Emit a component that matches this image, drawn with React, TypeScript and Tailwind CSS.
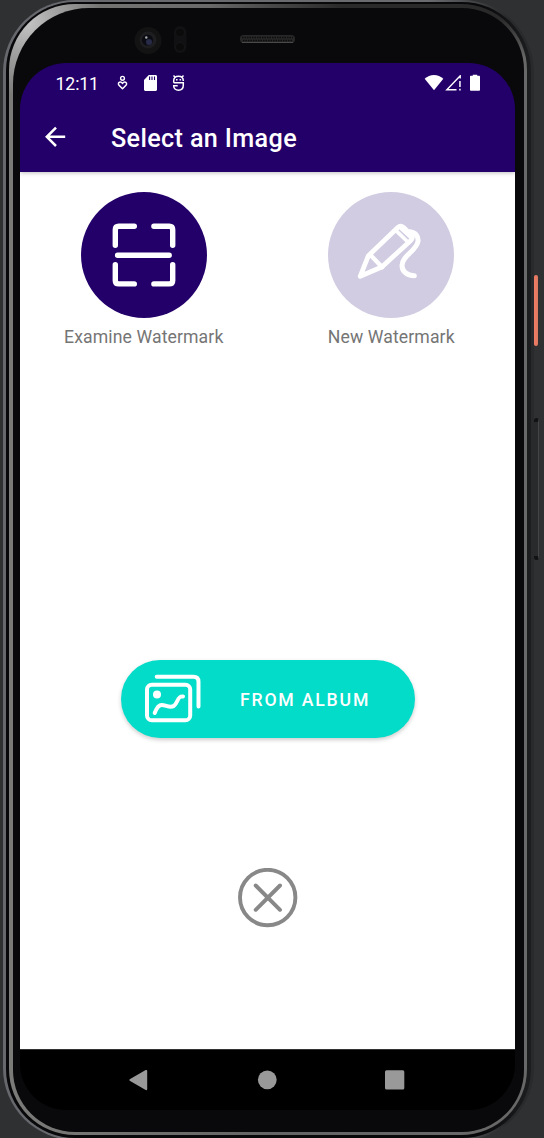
import type { ReactNode } from "react";

function Sensors() {
  return (
    <svg className="h-[55px] w-[511px] shrink-0" viewBox="13 8 511 55" fill="none">
      <circle cx="148" cy="40.5" r="13.5" fill="#131314" />
      <circle cx="148" cy="40" r="8.5" fill="#1e1e21" />
      <circle cx="147.5" cy="40" r="5.5" fill="#0b0b12" />
      <circle cx="149" cy="42" r="3" fill="#282b48" />
      <circle cx="146.3" cy="37.5" r="1.2" fill="#a9aaaf" />
      <rect x="174" y="26" width="12.5" height="27" rx="6" fill="#111113" />
      <circle cx="180" cy="32.5" r="4.5" fill="#0b0b0c" stroke="#161618" />
      <circle cx="180" cy="47" r="4.5" fill="#0b0b0c" stroke="#161618" />
      <rect x="240" y="35" width="55" height="8" rx="3.5" fill="#272727" />
      <path d="M242 37.5h51M243 40.5h50" stroke="#0d0d0d" strokeWidth="1.5" strokeDasharray="1.5 1" />
      <path d="M242 42.5h51" stroke="#484a49" />
    </svg>
  );
}

function StatusIcons() {
  return (
    <svg className="h-5 w-[74px]" viewBox="114 73 74 20" fill="none" stroke="#fff">
      <circle cx="122.5" cy="78.3" r="1.9" strokeWidth="1.4" />
      <path d="M122.5 88.7l-3.5-3.5c-1.3-1.5-.3-3.3 1.2-3.3 1 0 1.8.7 2.3 1.6.5-.9 1.3-1.6 2.3-1.6 1.5 0 2.5 1.8 1.2 3.3z" strokeWidth="1.5" strokeLinejoin="round" />
      <path d="M148.8 75h6.7c.8 0 1.5.6 1.5 1.4v13c0 .8-.7 1.5-1.5 1.5h-10c-.8 0-1.5-.7-1.5-1.5V80z" fill="#fff" stroke="none" />
      <path d="M149.6 76.5v3.4M152 76.5v3.4M154.5 76.5v3.4" stroke="#230069" strokeWidth="1.1" />
      <path d="M173.5 75.5l1.4 1.5M183.5 75.5l-1.4 1.5M173.7 82.8v-1.7c0-3 2-4.8 4.8-4.8s4.8 1.8 4.8 4.8M173.7 82.8h9.6v2.5c0 3-2 4.9-4.8 4.9s-4.8-1.9-4.8-4.5h4" strokeWidth="1.5" />
      <path d="M176 79.8h1.6M179.5 79.8h1.6" strokeWidth="1.4" />
    </svg>
  );
}

function SignalIcons() {
  return (
    <svg className="h-5 w-[60px]" viewBox="423 73 60 20" fill="#fff">
      <path d="M434 90.3l-9.3-11.5c5-5.2 13.6-5.2 18.6 0z" />
      <path d="M460.2 75v3.4M460.5 75.4L446.8 89.7h9.7" fill="none" stroke="#fff" strokeWidth="1.4" />
      <path d="M459.2 81h1.5v6h-1.5zM459.2 88.7h1.5v1.8h-1.5z" />
      <path d="M472.8 74.7h4.4v1.1h1.8c.6 0 1 .4 1 1v13c0 .6-.4 1-1 1h-8c-.6 0-1-.4-1-1v-13c0-.6.4-1 1-1h1.8z" />
    </svg>
  );
}

function ScanIcon() {
  return (
    <svg className="size-[126px]" viewBox="81 192 126 126" fill="none" stroke="#fff" strokeWidth="5.4" strokeLinecap="round" strokeLinejoin="round">
      <path d="M134.3 226.3h-15.5q-3.5 0-3.5 3.5v15.5M153.9 226.3h15.3q3.5 0 3.5 3.5v15.5M115.3 264.8v15.6q0 3.5 3.5 3.5h15.5M172.7 264.8v15.6q0 3.5-3.5 3.5h-15.3M117.6 255.2h51.6" />
    </svg>
  );
}

function PencilIcon() {
  return (
    <svg className="size-[126px]" viewBox="328 192 126 126" fill="none" stroke="#fff" strokeWidth="4.8" strokeLinecap="round" strokeLinejoin="round">
      <path d="M360.2 276.3l8.2-20.6 29.4-28.2q2.8-2.6 5.8 0l7.2 7.2q2.8 2.8 0 5.7l-29 26.6z" />
      <path d="M370.2 254.8l12 12.4" strokeWidth="4.4" />
      <path d="M396 230.6l11.6 11.2" strokeWidth="3.6" />
      <path d="M400.6 228.8l9.8 9" strokeWidth="2.6" />
      <path d="M410 231.8c5 .4 8.6 4.3 8 9.4-1 9.2-16 14.7-16 24.2 0 5.6 4.8 10.4 12.3 10.4" strokeWidth="5" />
    </svg>
  );
}

function AlbumIcon() {
  return (
    <svg className="h-[52px] w-[58px]" viewBox="144 673 58 52" fill="none" stroke="#fff" strokeWidth="4" strokeLinecap="round" strokeLinejoin="round">
      <rect x="147" y="684.8" width="43.2" height="35.4" rx="4.8" />
      <path d="M156.7 676.8h36.8q5 0 5 5v24.8" />
      <circle cx="157" cy="694.5" r="4" fill="#fff" stroke="none" />
      <path d="M154.7 713c2-5.6 4-8.1 7-8.1 4.2 0 8 3.7 12 1.1 4.7-3 3.3-10.6 9.3-9.5" />
    </svg>
  );
}

function Option({ label, tone, children }: { label: string; tone: string; children: ReactNode }) {
  return (
    <div className="flex w-[247.5px] flex-col items-center">
      <button aria-label={label} className={`size-[126px] rounded-full ${tone}`}>{children}</button>
      <span className="mt-[7px] whitespace-nowrap text-[17.65px] leading-6 tracking-[0.1px] text-[#757575]">{label}</span>
    </div>
  );
}

function Screen() {
  return (
    <div className="ml-[7px] flex h-[1047px] w-[495px] flex-col overflow-hidden rounded-[46px]">
      <header className="z-10 h-[109px] shrink-0 bg-[#230069] text-white shadow-[0_1px_4px_rgba(0,0,0,0.25)]">
        <div className="flex h-10 items-center pl-[35.5px] pr-8">
          <span className="w-[58.5px] pt-px text-[17.65px] leading-5 tracking-[-0.1px]">12:11</span>
          <StatusIcons />
          <span className="grow" />
          <SignalIcons />
        </div>
        <div className="flex h-[68px] items-center pl-[23px]">
          <svg className="h-6 w-6" viewBox="43 124.5 24 24" fill="none" stroke="#fff" strokeWidth="2.5">
            <path d="M65.2 136.3H47.3M56 127.1l-9.2 9.2 9.2 9.2" />
          </svg>
          <h1 className="ml-11 mt-1 text-[25.2px] font-medium tracking-[0.35px]">Select an Image</h1>
        </div>
      </header>
      <main className="flex grow flex-col items-center bg-white">
        <div className="flex w-full pt-5">
          <Option label="Examine Watermark" tone="bg-[#230069]"><ScanIcon /></Option>
          <Option label="New Watermark" tone="bg-[#d1cce1]"><PencilIcon /></Option>
        </div>
        <button className="mt-[311px] flex h-[78px] w-[294px] items-center rounded-full bg-[#03dcc8] pl-[23px] text-white shadow-[0_2px_4px_rgba(0,0,0,0.2)]">
          <AlbumIcon />
          <span className="ml-[38.5px] mt-0.5 whitespace-nowrap text-[17.65px] font-medium tracking-[1.8px]">FROM ALBUM</span>
        </button>
        <button aria-label="Close" className="mt-[130px]">
          <svg className="block size-[60px]" viewBox="0.5 0 60 60" fill="none" stroke="#888" strokeWidth="3.9" strokeLinecap="round">
            <circle cx="30.2" cy="29.5" r="27.7" />
            <path d="M18.2 17.5l24.3 24.3M42.5 17.5l-24.3 24.3" />
          </svg>
        </button>
      </main>
      <nav className="flex h-[61px] shrink-0 items-center justify-center border-t border-[#333] bg-black">
        <svg className="h-6 w-[281px]" viewBox="127 1068 281 24" fill="#999">
          <path d="M129.7 1079.3l16-9.2q1.5-.7 1.5 1v18q0 1.7-1.5.9l-16-9.2q-.8-.7 0-1.5z" />
          <circle cx="267.3" cy="1079.8" r="9.4" />
          <rect x="385" y="1070.3" width="19.3" height="19.3" rx="1.5" />
        </svg>
      </nav>
    </div>
  );
}

export default function App() {
  return (
    <div className="flex h-[1138px] w-[544px] overflow-hidden bg-[#2f3032] font-['Roboto',sans-serif]">
      <div className="ml-[3px] h-[1140px] w-[531px] shrink-0 rounded-[72px] bg-linear-to-r from-[#66686d] from-5% via-[#696b6e] via-80% to-[#292a2c] to-95% pb-0.5 pl-[3px] pr-[3px] pt-0.5">
        <div className="h-[1136px] w-[525px] rounded-[69px] bg-linear-to-r from-[#08080a] from-90% to-[#1d1e1f] pl-[3px] pt-0.5">
          <div className="h-[1131px] w-[518px] rounded-[66px] bg-[radial-gradient(circle_at_18px_18px,#c4c4c4_0,#a5a5a5_28px,transparent_75px),radial-gradient(ellipse_220px_60px_at_420px_0,#2a2a2b_0,#2a2a2b_40%,transparent_100%),linear-gradient(to_right,#7b7c7a,#646464,#686868)] pl-1 pt-1">
            <div className="h-[1124px] w-[511px] rounded-[62px] rounded-tl-[76px] bg-[#09090b]">
              <Sensors />
              <Screen />
            </div>
          </div>
        </div>
      </div>
      <div className="flex w-[10px] flex-col">
        <div className="mt-[275px] h-[71px] w-1 rounded-xs bg-linear-to-r from-[#f47c65] to-[#d9795f]" />
        <div className="mt-[72px] h-[142px] w-[5px] rounded-sm border-y-4 border-r border-y-[#111213] border-r-[#444547] bg-[#292a2b]" />
      </div>
    </div>
  );
}
